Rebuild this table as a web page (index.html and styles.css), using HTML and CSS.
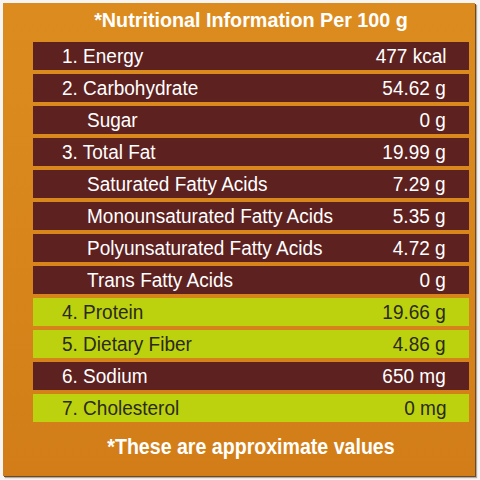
FILE: index.html
```html
<!DOCTYPE html>
<html>
<head>
<meta charset="utf-8">
<link rel="stylesheet" href="styles.css">
</head>
<body>
<div class="panel">
  <div class="inner">
    <div class="title">*Nutritional Information Per 100 g</div>
    <div class="rows">
      <div class="row dark"><span class="lbl">1. Energy</span><span class="val">477 kcal</span></div>
      <div class="row dark"><span class="lbl">2. Carbohydrate</span><span class="val">54.62 g</span></div>
      <div class="row dark sub"><span class="lbl">Sugar</span><span class="val">0 g</span></div>
      <div class="row dark"><span class="lbl">3. Total Fat</span><span class="val">19.99 g</span></div>
      <div class="row dark sub"><span class="lbl">Saturated Fatty Acids</span><span class="val">7.29 g</span></div>
      <div class="row dark sub"><span class="lbl">Monounsaturated Fatty Acids</span><span class="val">5.35 g</span></div>
      <div class="row dark sub"><span class="lbl">Polyunsaturated Fatty Acids</span><span class="val">4.72 g</span></div>
      <div class="row dark sub"><span class="lbl">Trans Fatty Acids</span><span class="val">0 g</span></div>
      <div class="row green"><span class="lbl">4. Protein</span><span class="val">19.66 g</span></div>
      <div class="row green"><span class="lbl">5. Dietary Fiber</span><span class="val">4.86 g</span></div>
      <div class="row dark"><span class="lbl">6. Sodium</span><span class="val">650 mg</span></div>
      <div class="row green"><span class="lbl">7. Cholesterol</span><span class="val">0 mg</span></div>
    </div>
    <div class="footer">*These are approximate values</div>
  </div>
</div>
</body>
</html>
```
FILE: styles.css
```css
html, body {
  margin: 0;
  padding: 0;
  background: #f6f5f3;
}
body {
  width: 480px;
  height: 480px;
  overflow: hidden;
  font-family: "Liberation Sans", Arial, sans-serif;
}
.panel {
  margin: 3px 0 0 3px;
  width: 472px;
  height: 473px;
  background: linear-gradient(180deg, #dc8c1f 0%, #d7851b 60%, #d27d18 100%);
  box-shadow: 1px 1px 0 #6b4a2a, 2px 2px 1px rgba(80, 50, 30, 0.4);
}
.inner {
  margin-left: 30px;
  width: 436px;
  display: flex;
  flex-direction: column;
}
.title, .footer {
  color: #fff;
  font-weight: bold;
  text-align: center;
  white-space: nowrap;
}
.title {
  height: 34px;
  line-height: 34px;
  margin-bottom: 5px;
  font-size: 21px;
  transform: scaleX(0.94);
}
.footer {
  height: 34px;
  line-height: 34px;
  margin-top: 8px;
  font-size: 22px;
  transform: scaleX(0.89);
}
.rows {
  display: flex;
  flex-direction: column;
  gap: 4px;
}
.row {
  height: 28px;
  line-height: 28px;
  display: flex;
  justify-content: space-between;
  padding: 0 23px 0 29px;
  font-size: 20px;
  white-space: nowrap;
}
.row.sub {
  padding-left: 54px;
}
.lbl, .val {
  display: inline-block;
  transform: scaleX(0.95);
}
.lbl {
  transform-origin: left center;
}
.val {
  transform-origin: right center;
}
.dark {
  background: #5d2120;
  color: #fff;
}
.green {
  background: #bcd20e;
  color: #2b2a1a;
}
```
